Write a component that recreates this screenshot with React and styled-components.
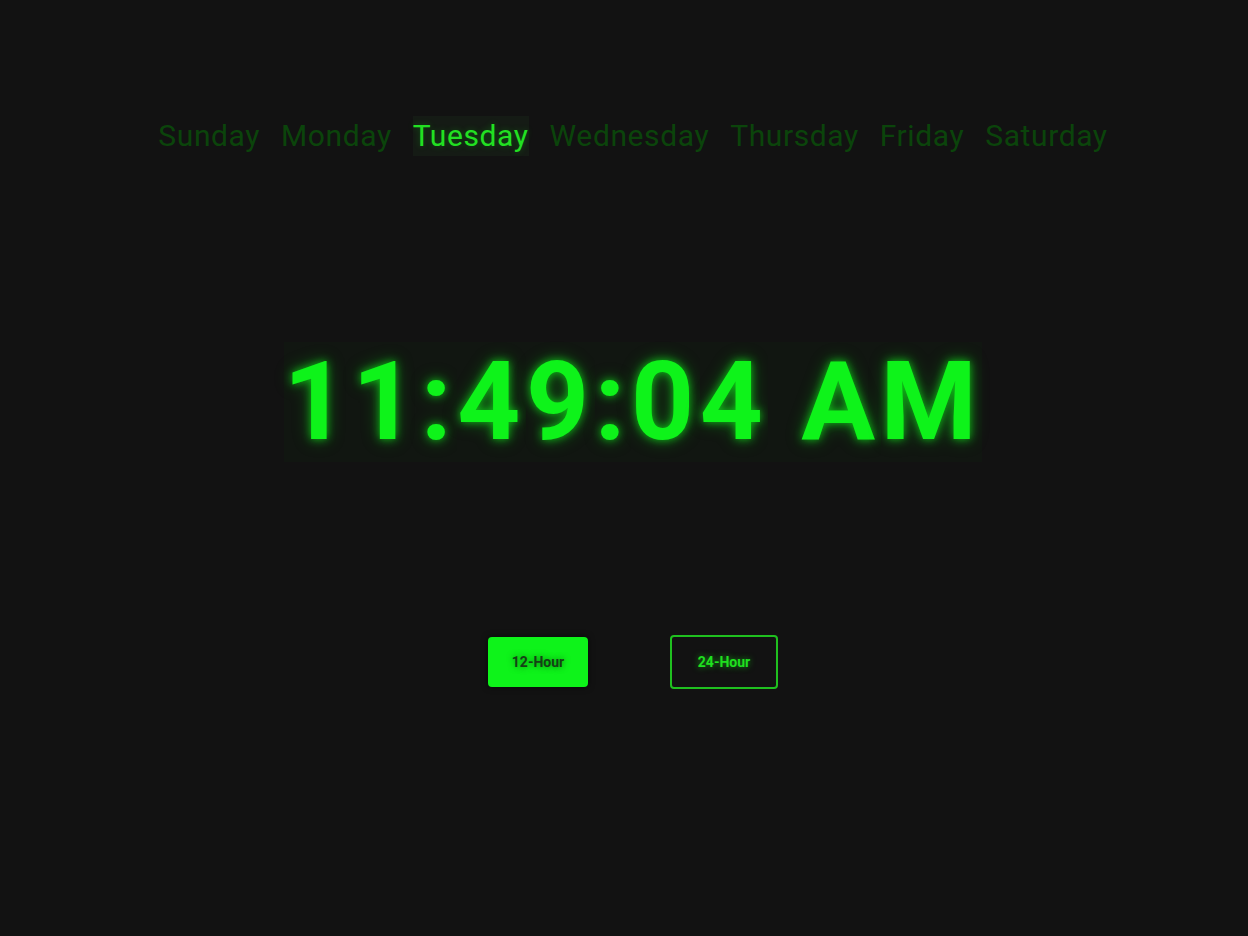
import React, { useState } from "react";
import styled, { createGlobalStyle } from "styled-components";

const days = [
  "Sunday",
  "Monday",
  "Tuesday",
  "Wednesday",
  "Thursday",
  "Friday",
  "Saturday",
];

const GlobalStyle = createGlobalStyle`
  html, body {
    margin: 0;
    padding: 0;
    background: #121212;
  }
  body {
    font-family: Roboto, "Liberation Sans", sans-serif;
  }
`;

const App = () => {
  const [format, setFormat] = useState("12");
  const time = format === "12" ? "11:49:04 AM" : "11:49:04";

  return (
    <Page>
      <GlobalStyle />
      <DayRow>
        {days.map((day, i) => (
          <Day key={day} active={i === 2}>
            {day}
          </Day>
        ))}
      </DayRow>
      <Clock>
        {time.split("").map((ch, i) => (
          <Char key={i}>{ch === " " ? "\u00a0" : ch}</Char>
        ))}
      </Clock>
      <Buttons>
        <FormatButton
          active={format === "12"}
          onClick={() => setFormat("12")}
        >
          12-Hour
        </FormatButton>
        <FormatButton
          active={format === "24"}
          onClick={() => setFormat("24")}
        >
          24-Hour
        </FormatButton>
      </Buttons>
    </Page>
  );
};

const Page = styled.div`
  box-sizing: border-box;
  min-height: 936px;
  padding: 116px 0 0 18px;
  background: #121212;
  display: flex;
  flex-direction: column;
  align-items: center;
`;

const DayRow = styled.div`
  display: flex;
  gap: 21px;
  align-items: center;
`;

const Day = styled.div`
  font-family: Roboto, "Liberation Sans", sans-serif;
  font-size: 30px;
  font-weight: 400;
  letter-spacing: 0.6px;
  line-height: 40px;
  color: ${({ active }) => (active ? "#22e022" : "#0b440b")};
  background: ${({ active }) => (active ? "#151b15" : "transparent")};
  text-shadow: ${({ active }) =>
    active ? "0 0 6px rgba(0, 255, 20, 0.25)" : "none"};
`;

const Clock = styled.div`
  margin-top: 186px;
  display: flex;
  font-family: Roboto, "Liberation Sans", sans-serif;
  font-size: 110px;
  font-weight: 700;
  line-height: 120px;
  color: #0ef31a;
  letter-spacing: 5.5px;
`;

const Char = styled.span`
  background: #111611;
  text-shadow: 0 0 8px rgba(14, 243, 26, 0.7), 0 0 18px rgba(14, 243, 26, 0.35);
`;

const Buttons = styled.div`
  margin-top: 173px;
  display: flex;
  align-items: center;
  gap: 82px;
`;

const FormatButton = styled.button`
  box-sizing: border-box;
  width: ${({ active }) => (active ? "100px" : "108px")};
  height: ${({ active }) => (active ? "50px" : "54px")};
  border-radius: 4px;
  border: 2px solid ${({ active }) => (active ? "#0ef31a" : "#1fc01f")};
  background: ${({ active }) => (active ? "#0ef31a" : "transparent")};
  color: ${({ active }) => (active ? "#154015" : "#1fe01f")};
  font-family: Roboto, "Liberation Sans", sans-serif;
  font-size: 14px;
  font-weight: 700;
  cursor: pointer;
  box-shadow: ${({ active }) =>
    active ? "0 0 6px rgba(0, 0, 0, 0.6)" : "none"};
  text-shadow: ${({ active }) =>
    active
      ? "0 0 6px rgba(0, 60, 0, 0.6)"
      : "0 0 6px rgba(30, 240, 30, 0.6)"};
`;

export default App;
